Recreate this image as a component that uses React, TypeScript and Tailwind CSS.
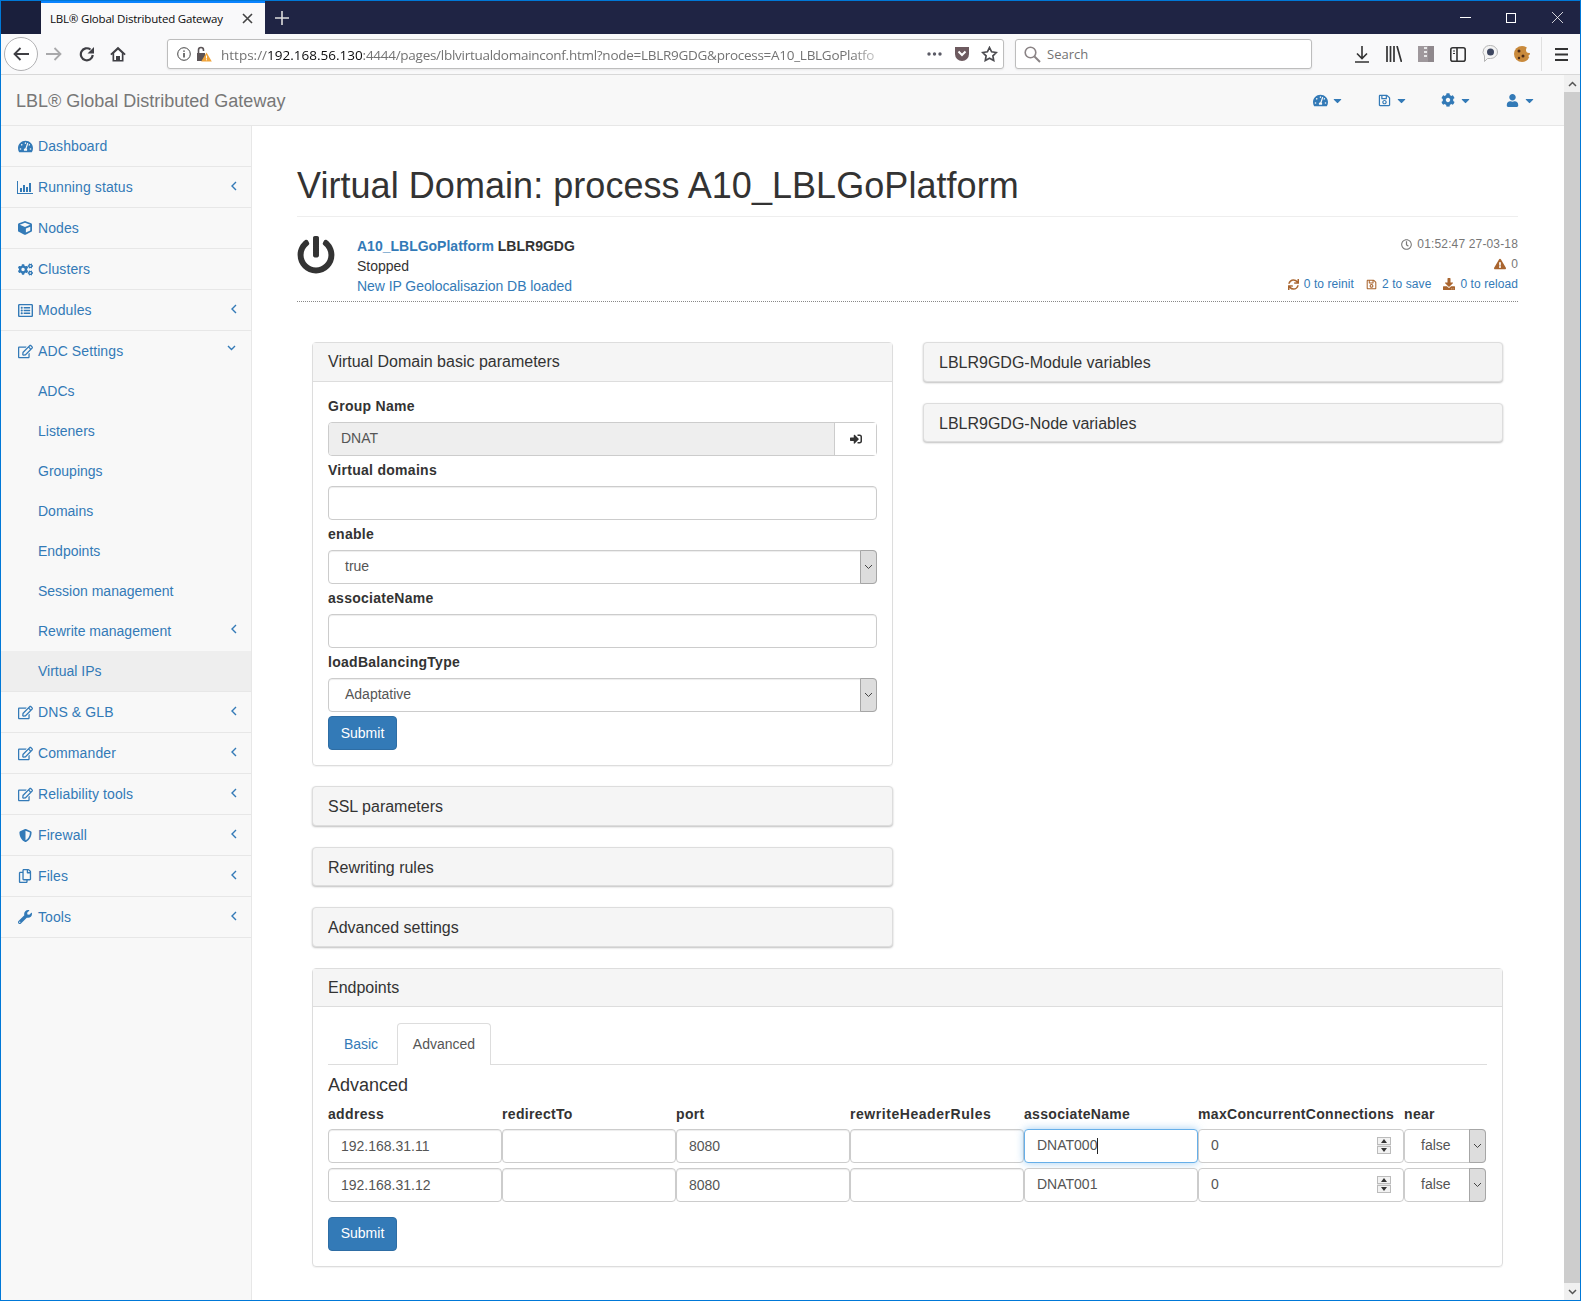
import React from "react";
import {
  FaCaretDown, FaCog, FaCogs, FaCube, FaDownload, FaExclamationTriangle, FaPowerOff,
  FaRegClock, FaRegCopy, FaRegEdit, FaRegListAlt, FaRegSave, FaShieldAlt, FaSignInAlt, FaSync, FaTachometerAlt, FaUser, FaWrench,
} from "react-icons/fa";

const BarIcon = () => (
  <svg width="16" height="13" viewBox="0 0 16 13" fill="currentColor">
    <path d="M0 0h1v12h15v1H0zM3 7h2v4H3zM6 4h2v7H6zM9 6h2v5H9zM12 2h2v9h-2z" />
  </svg>
);

const ChevLeft = ({ className }: { className: string }) => (
  <svg className={`absolute text-[#337ab7] ${className}`} width="6" height="10" viewBox="0 0 6 10" fill="none" stroke="currentColor" strokeWidth="1.400"><path d="M5 1L1 5l4 4" /></svg>
);
const ChevDown = ({ className }: { className: string }) => (
  <svg className={`absolute text-[#337ab7] ${className}`} width="9" height="6" viewBox="0 0 9 6" fill="none" stroke="currentColor" strokeWidth="1.400"><path d="M1 1l3.500 3.500L8 1" /></svg>
);

type Item = { label: string; icon: React.ReactNode; arrow?: "left" | "down" };
const top: Item[] = [
  { label: "Dashboard", icon: <FaTachometerAlt size={15} /> },
  { label: "Running status", icon: <BarIcon />, arrow: "left" },
  { label: "Nodes", icon: <FaCube size={14} /> },
  { label: "Clusters", icon: <FaCogs size={15} /> },
  { label: "Modules", icon: <FaRegListAlt size={15} />, arrow: "left" },
  { label: "ADC Settings", icon: <FaRegEdit size={15} />, arrow: "down" },
];
const subs = ["ADCs", "Listeners", "Groupings", "Domains", "Endpoints", "Session management", "Rewrite management", "Virtual IPs"];
const bottom: Item[] = [
  { label: "DNS & GLB", icon: <FaRegEdit size={15} />, arrow: "left" },
  { label: "Commander", icon: <FaRegEdit size={15} />, arrow: "left" },
  { label: "Reliability tools", icon: <FaRegEdit size={15} />, arrow: "left" },
  { label: "Firewall", icon: <FaShieldAlt size={13} />, arrow: "left" },
  { label: "Files", icon: <FaRegCopy size={14} />, arrow: "left" },
  { label: "Tools", icon: <FaWrench size={14} />, arrow: "left" },
];

function Row({ item, last }: { item: Item; last?: boolean }) {
  return (
    <div className={`relative flex items-center pl-[16px] ${last ? "h-[40px]" : "h-[41px] border-b border-[#e7e7e7]"}`}>
      <span className="flex w-[16px] justify-center text-[#337ab7]">{item.icon}</span>
      <span className="ml-[5px] text-[14px] tracking-[0.1px] text-[#337ab7]">{item.label}</span>
      {item.arrow === "left" && <ChevLeft className="left-[230px] top-[14px]" />}
      {item.arrow === "down" && <ChevDown className="left-[226px] top-[14px]" />}
    </div>
  );
}

function Sidebar() {
  return (
    <aside className="w-[251px] shrink-0 border-r border-[#e7e7e7] bg-[#f8f8f8]">
      {top.map((i, n) => <Row key={i.label} item={i} last={n === top.length - 1} />)}
      {subs.map((s) => (
        <div key={s} className={`relative flex h-[40px] items-center pl-[37px] text-[14px] text-[#337ab7] ${s === "Virtual IPs" ? "bg-[#eeeeee]" : ""}`}>
          {s}
          {s === "Rewrite management" && <ChevLeft className="left-[230px] top-[13px]" />}
        </div>
      ))}
      <div className="border-t border-[#e7e7e7]" />
      {bottom.map((i) => <Row key={i.label} item={i} />)}
    </aside>
  );
}

const Arrow = () => (
  <span className="-my-px -mr-px flex w-[17px] shrink-0 items-center justify-center self-stretch rounded-r-[4px] border border-[#a6a6a6] bg-[#dddddd]">
    <svg width="9" height="6" viewBox="0 0 9 6" fill="none" stroke="#444" strokeWidth="1"><path d="M1 1l3.500 3.500L8 1" /></svg>
  </span>
);

function Field({ label, children }: { label: string; children: React.ReactNode }) {
  return (
    <div className="mb-[4.500px]">
      <label className="mb-[5.500px] block h-[20px] text-[14px] font-bold leading-[20px] tracking-[0.28px] text-[#333]">{label}</label>
      {children}
    </div>
  );
}

function TextInput({ value = "" }: { value?: string }) {
  return <input readOnly value={value} className="block h-[34px] w-full rounded-[4px] border border-[#ccc] bg-white px-[12px] text-[14px] text-[#555] shadow-[inset_0_1px_1px_rgba(0,0,0,0.075)]" />;
}

function SelectBox({ value }: { value: string }) {
  return (
    <div className="flex h-[34px] items-center rounded-[4px] border border-[#ccc] bg-white shadow-[inset_0_1px_1px_rgba(0,0,0,0.075)]">
      <span className="flex-1 pl-[16px] text-[14px] text-[#555]">{value}</span>
      <Arrow />
    </div>
  );
}

const SubmitBtn = () => (
  <button className="flex h-[34px] w-[69px] items-center justify-center rounded-[4px] border border-[#2e6da4] bg-[#337ab7] text-[14px] text-white">Submit</button>
);

function Collapsed({ title }: { title: string }) {
  return (
    <div className="h-[39.500px] rounded-[4px] border border-[#ddd] bg-[#f5f5f5] px-[15px] text-[16px] leading-[39px] text-[#333] shadow-[0_1px_2px_rgba(0,0,0,0.25)]">{title}</div>
  );
}

function Spin() {
  return (
    <span className="mr-[12px] flex h-[17px] w-[14px] flex-col justify-between bg-[#e6e6e6]">
      <span className="flex h-[8px] items-center justify-center border border-[#bbb] bg-[#f2f2f2]"><svg width="6" height="4" viewBox="0 0 6 4" fill="#333"><path d="M3 0l3 4H0z" /></svg></span>
      <span className="flex h-[8px] items-center justify-center border border-[#bbb] bg-[#f2f2f2]"><svg width="6" height="4" viewBox="0 0 6 4" fill="#333"><path d="M0 0h6L3 4z" /></svg></span>
    </span>
  );
}

function EndpointRow({ a, assoc, focused }: { a: string; assoc: string; focused?: boolean }) {
  return (
    <>
      <TextInput value={a} />
      <TextInput />
      <TextInput value="8080" />
      <TextInput />
      <div className={`flex h-[34px] items-center rounded-[4px] border bg-white pl-[12px] text-[14px] text-[#555] ${focused ? "border-[#66afe9] shadow-[0_0_8px_rgba(102,175,233,0.6)]" : "border-[#ccc]"}`}>
        {assoc}{focused && <span className="h-[16px] w-px bg-[#222]" />}
      </div>
      <div className="flex h-[34px] items-center justify-between rounded-[4px] border border-[#ccc] bg-white pl-[12px] text-[14px] text-[#555]">0<Spin /></div>
      <div className="flex h-[34px] items-center rounded-[4px] border border-[#ccc] bg-white text-[14px] text-[#555]">
        <span className="flex-1 pl-[16px]">false</span>
        <Arrow />
      </div>
    </>
  );
}

const Header = ["address", "redirectTo", "port", "rewriteHeaderRules", "associateName", "maxConcurrentConnections", "near"];

function Browser() {
  const c = "flex h-full w-[32px] items-center justify-center";
  return (
    <>
      <div className="flex h-[33px] items-stretch bg-[#1f2444]">
        <div className="w-[40px] bg-[#1a1f3c]" />
        <div className="flex w-[224px] items-center border-t-2 border-[#0a84ff] bg-[#f9f9fa] pl-[9px] font-[family-name:Open_Sans,sans-serif] text-[11.500px] tracking-[-0.2px] text-[#0c0c0d]">
          <span className="w-[192px] whitespace-nowrap">LBL® Global Distributed Gateway</span>
          <svg width="11" height="11" viewBox="0 0 11 11" stroke="#444" strokeWidth="1.600"><path d="M1 1l9 9M10 1l-9 9" /></svg>
        </div>
        <div className="flex w-[34px] items-center justify-center">
          <svg width="14" height="14" viewBox="0 0 14 14" stroke="#ddd" strokeWidth="1.600"><path d="M7 0v14M0 7h14" /></svg>
        </div>
        <div className="flex-1" />
        <div className="flex w-[138px] items-center text-white">
          <span className="flex w-[46px] justify-center"><svg width="11" height="1" viewBox="0 0 11 1"><path d="M0 0h11v1H0z" fill="#fff" /></svg></span>
          <span className="flex w-[46px] justify-center"><svg width="10" height="10" viewBox="0 0 10 10" fill="none" stroke="#fff"><rect x=".5" y=".5" width="9" height="9" /></svg></span>
          <span className="flex w-[46px] justify-center"><svg width="11" height="11" viewBox="0 0 11 11" stroke="#fff" strokeWidth=".8"><path d="M0 0l11 11M11 0L0 11" /></svg></span>
        </div>
      </div>
      <div className="flex h-[41px] items-center border-b border-[#d8d8d8] bg-[#f9f9fa] pl-[3px]">
        <span className="flex h-[34px] w-[34px] items-center justify-center rounded-full border border-[#b1b1b3] bg-white">
          <svg width="16" height="14" viewBox="0 0 16 14" fill="none" stroke="#3f3f44" strokeWidth="1.800"><path d="M16 7H2M7.500 1L1.500 7l6 6" /></svg>
        </span>
        <span className={c}><svg width="16" height="14" viewBox="0 0 16 14" fill="none" stroke="#a9a9ab" strokeWidth="1.800"><path d="M0 7h14M8.500 1l6 6-6 6" /></svg></span>
        <span className={c}><svg className="ml-[1px]" width="16" height="16" viewBox="0 0 16 16" fill="none" stroke="#3f3f44" strokeWidth="2.200"><path d="M13.800 9A6 6 0 1 1 11.500 3.500" /><path d="M15 1v6.500H8.500z" fill="#3f3f44" stroke="none" /></svg></span>
        <span className={c}><svg width="16" height="16" viewBox="0 0 16 16"><path d="M8 .8L.3 8l1.100 1.200L2.500 8.200V15.500h11V8.200l1.100 1L15.700 8z" fill="#3f3f44" /><path d="M8 3.800l3.800 3.500v6.600h-1.800v-4H6v4H4.200V7.300z" fill="#fff" /></svg></span>
        <div className="relative ml-[33px] flex h-[30px] w-[837px] items-center rounded-[3px] border border-[#bdbdbd] bg-white pl-[9px] shadow-[0_1px_2px_rgba(0,0,0,0.08)]">
          <svg width="14" height="14" viewBox="0 0 14 14" fill="none" stroke="#444"><circle cx="7" cy="7" r="6.300" /><path d="M7 6v4.500M7 3.500v1.300" strokeWidth="1.500" /></svg>
          <svg className="ml-[5px]" width="16" height="16" viewBox="0 0 16 16"><path d="M1 7h8v8H1z" fill="#5b5457" /><path d="M2.500 7V4a2.500 2.500 0 0 1 5 0v1" fill="none" stroke="#5b5457" strokeWidth="1.600" /><path d="M10.500 6.500l5.300 9H5.200z" fill="#f0a43a" /><path d="M10 9.500h1v3h-1zM10 13.200h1v1h-1z" fill="#fff" /></svg>
          <div className="ml-[9px] mt-[2px] w-[670px] whitespace-nowrap font-[family-name:Open_Sans,sans-serif] text-[13.500px] text-[#737373] [mask-image:linear-gradient(to_right,black_94%,transparent)]">
            https://<span className="text-[#0c0c0d]">192.168.56.130</span><span className="tracking-[-0.27px]">:4444/pages/lblvirtualdomainconf.html?node=LBLR9GDG&amp;process=A10_LBLGoPlatfo</span>
          </div>
          <svg className="ml-[36px]" width="15" height="4" viewBox="0 0 15 4" fill="#5b5b66"><circle cx="2" cy="2" r="1.700" /><circle cx="7.500" cy="2" r="1.700" /><circle cx="13" cy="2" r="1.700" /></svg>
          <svg className="ml-[12px]" width="16" height="16" viewBox="0 0 16 16"><path d="M1 1h14v7a7 7 0 0 1-14 0z" fill="#6d5a5f" /><path d="M4.500 5.500L8 9l3.500-3.500" fill="none" stroke="#fff" strokeWidth="2" /></svg>
          <svg className="ml-[11px]" width="17" height="16" viewBox="0 0 17 16" fill="none" stroke="#4a4a4f" strokeWidth="1.700"><path d="M8.500 1.500l2.100 4.300 4.700.7-3.400 3.300.8 4.700-4.200-2.200-4.200 2.200.8-4.700L1.700 6.500l4.700-.7z" /></svg>
        </div>
        <div className="ml-[11px] flex h-[30px] w-[297px] items-center rounded-[3px] border border-[#bdbdbd] bg-white pl-[8px] shadow-[0_1px_2px_rgba(0,0,0,0.08)]">
          <svg width="17" height="17" viewBox="0 0 17 17" fill="none" stroke="#8a8385" strokeWidth="1.600"><circle cx="6.500" cy="6.500" r="5.300" /><path d="M10.500 10.500L16 16" strokeWidth="2" /></svg>
          <span className="ml-[6px] mt-[2px] font-[family-name:Open_Sans,sans-serif] text-[13px] text-[#737373]">Search</span>
        </div>
        <div className="ml-[34px] flex h-full items-center">
          <span className={c}><svg width="14" height="17" viewBox="0 0 14 17" fill="none" stroke="#333" strokeWidth="1.600"><path d="M7 0v12M2 7.500l5 5 5-5M0 16h14" /></svg></span>
          <span className={c}><svg width="16" height="16" viewBox="0 0 16 16" stroke="#333" strokeWidth="1.700"><path d="M1 0v16M4.500 0v16M8 0v16M11 0l4.500 16" /></svg></span>
          <span className={c}><svg width="16" height="16" viewBox="0 0 16 16"><rect width="16" height="16" fill="#9f989c" /><path d="M6 1h3v2H6zM6 5h3v2H6zM6 9h3v2H6z" fill="#e8e8e8" /><rect x="10" width="6" height="16" fill="#8f888c" /></svg></span>
          <span className={c}><svg width="16" height="15" viewBox="0 0 16 15" fill="none" stroke="#333" strokeWidth="1.600"><rect x=".8" y=".8" width="14.400" height="13.400" rx="2" /><path d="M7 1v13" /><path d="M3 4h2M3 6.500h2" strokeWidth="1" /></svg></span>
          <span className={c}><svg width="17" height="18" viewBox="0 0 17 18"><path d="M8.500 .5a7 6.500 0 0 1 0 13H5.500L2.500 16.500V11A7 6.500 0 0 1 8.500 .5z" fill="#f4f4f4" stroke="#b5b5b5" /><circle cx="8.500" cy="7" r="3.500" fill="#3d4660" /></svg></span>
          <span className={c}><svg width="17" height="18" viewBox="0 0 17 18"><circle cx="8" cy="9" r="8" fill="#c98a3c" /><circle cx="5" cy="6" r="1.500" fill="#4a2a18" /><circle cx="9" cy="11" r="1.500" fill="#4a2a18" /><circle cx="5" cy="13" r="1.200" fill="#4a2a18" /><circle cx="15" cy="5" r="3" fill="#f9f9fa" /><circle cx="16" cy="11" r="1.500" fill="#f9f9fa" /></svg></span>
        </div>
        <span className="ml-[3px] h-[34px] w-px bg-[#e0e0e0]" />
        <span className="flex w-[38px] justify-center"><svg width="13" height="13" viewBox="0 0 13 13" fill="#333"><path d="M0 0h13v2H0zM0 5.500h13v2H0zM0 11h13v2H0z" /></svg></span>
      </div>
    </>
  );
}

function Navbar() {
  const items = [
    { i: <FaTachometerAlt size={15} />, w: "w-[64px]" },
    { i: <FaRegSave size={13} />, w: "w-[64px]" },
    { i: <FaCog size={14} />, w: "w-[64px]" },
    { i: <FaUser size={13} />, w: "w-[44px]" },
  ];
  return (
    <div className="flex h-[51px] items-center justify-between border-b border-[#e7e7e7] bg-[#f8f8f8] pl-[15px]">
      <span className="pt-[2px] text-[18px] text-[#777]">LBL® Global Distributed Gateway</span>
      <div className="flex pr-[16px]">
        {items.map((x, n) => (
          <span key={n} className={`flex ${x.w} items-center gap-[3px] text-[#337ab7]`}>
            <span className="flex w-[16px] justify-center">{x.i}</span>
            <FaCaretDown size={13} />
          </span>
        ))}
      </div>
    </div>
  );
}

function Main() {
  const brown = "text-[#a9652f]";
  return (
    <main className="min-w-0 flex-1 bg-white pl-[45px] pr-[46px] pt-[40px]">
      <h1 className="border-b border-[#eeeeee] pb-[10px] text-[36px] font-normal leading-[40px] tracking-[0.05px] text-[#333]">Virtual Domain: process A10_LBLGoPlatform</h1>
      <div className="flex justify-between border-b border-dotted border-[#888] pb-[5px] pt-[19px]">
        <div className="flex">
          <FaPowerOff size={38} className="mr-[22px] text-[#333]" />
          <div className="text-[14px] leading-[20px] text-[#333]">
            <div className="font-bold"><span className="text-[#337ab7]">A10_LBLGoPlatform</span> LBLR9GDG</div>
            <div>Stopped</div>
            <div className="tracking-[-0.06px] text-[#337ab7]">New IP Geolocalisazion DB loaded</div>
          </div>
        </div>
        <div className="mt-[-2px] flex flex-col items-end text-[12px] leading-[20px]">
          <div className="flex items-center gap-[5px] tracking-[0.15px] text-[#777]"><FaRegClock size={11} />01:52:47 27-03-18</div>
          <div className={`flex items-center gap-[5px] ${brown}`}><FaExclamationTriangle size={12} className="text-[#a9652f]" /><span className="text-[#777]">0</span></div>
          <div className="flex items-center tracking-[0.08px] text-[#337ab7]">
            <FaSync size={11} className={`${brown} mr-[5px]`} />0 to reinit
            <FaRegSave size={11} className={`${brown} ml-[12px] mr-[5px]`} />2 to save
            <FaDownload size={12} className={`${brown} ml-[12px] mr-[5px]`} />0 to reload
          </div>
        </div>
      </div>

      <div className="mx-[15px] mt-[40px] flex gap-[30px]">
        <div className="flex w-[581px] shrink-0 flex-col gap-[21px]">
          <div className="-mb-[1px] rounded-[4px] border border-[#ddd] shadow-[0_1px_1px_rgba(0,0,0,0.05)]">
            <div className="h-[39px] border-b border-[#ddd] bg-[#f5f5f5] px-[15px] text-[16px] leading-[38px] text-[#333]">Virtual Domain basic parameters</div>
            <div className="h-[383px] px-[15px] pt-[14px]">
              <Field label="Group Name">
                <div className="flex h-[34px] rounded-[4px] border border-[#ccc]">
                  <input readOnly value="DNAT" className="min-w-0 flex-1 rounded-l-[3px] bg-[#eeeeee] px-[12px] text-[14px] text-[#555]" />
                  <span className="flex w-[42px] items-center justify-center border-l border-[#ccc] bg-white"><FaSignInAlt size={12} className="text-[#333]" /></span>
                </div>
              </Field>
              <Field label="Virtual domains"><TextInput /></Field>
              <Field label="enable"><SelectBox value="true" /></Field>
              <Field label="associateName"><TextInput /></Field>
              <Field label="loadBalancingType"><SelectBox value="Adaptative" /></Field>
              <div className="mt-[4px]"><SubmitBtn /></div>
            </div>
          </div>
          <Collapsed title="SSL parameters" />
          <Collapsed title="Rewriting rules" />
          <Collapsed title="Advanced settings" />
        </div>
        <div className="flex w-[580px] shrink-0 flex-col gap-[21px]">
          <Collapsed title="LBLR9GDG-Module variables" />
          <Collapsed title="LBLR9GDG-Node variables" />
        </div>
      </div>

      <div className="mx-[15px] mt-[21px] rounded-[4px] border border-[#ddd] shadow-[0_1px_1px_rgba(0,0,0,0.05)]">
        <div className="h-[38px] border-b border-[#ddd] bg-[#f5f5f5] px-[15px] text-[16px] leading-[38px] text-[#333]">Endpoints</div>
        <div className="px-[15px] pb-[15px] pt-[16px]">
          <div className="flex h-[42px] items-end border-b border-[#ddd] pl-px">
            <span className="mr-[4px] flex h-[39px] w-[64px] items-center justify-center text-[14px] text-[#337ab7]">Basic</span>
            <span className="mb-[-1px] flex h-[42px] w-[94px] items-center justify-center rounded-t-[4px] border border-b-0 border-[#ddd] bg-white text-[14px] text-[#555]">Advanced</span>
          </div>
          <h4 className="mt-[10px] text-[18px] font-normal leading-[20px] text-[#333]">Advanced</h4>
          <div className="mt-[9px] grid grid-cols-[174px_174px_174px_174px_174px_206px_82px] gap-y-[5px]">
            {Header.map((h) => <div key={h} className={`whitespace-nowrap text-[14px] font-bold leading-[20px] text-[#333] ${h === "rewriteHeaderRules" ? "tracking-[0.55px]" : "tracking-[0.33px]"}`}>{h}</div>)}
            <EndpointRow a="192.168.31.11" assoc="DNAT000" focused />
            <EndpointRow a="192.168.31.12" assoc="DNAT001" />
          </div>
          <div className="mt-[15px]"><SubmitBtn /></div>
        </div>
      </div>
    </main>
  );
}

function Scrollbar() {
  return (
    <div className="flex w-[16px] shrink-0 flex-col bg-[#f0f0f0]">
      <div className="flex h-[17px] items-center justify-center"><svg width="9" height="6" viewBox="0 0 9 6" fill="none" stroke="#555" strokeWidth="1.500"><path d="M1 5l3.500-3.500L8 5" /></svg></div>
      <div className="flex-1 bg-[#cdcdcd]" />
      <div className="flex h-[17px] items-center justify-center"><svg width="9" height="6" viewBox="0 0 9 6" fill="none" stroke="#555" strokeWidth="1.500"><path d="M1 1l3.500 3.500L8 1" /></svg></div>
    </div>
  );
}

export default function App() {
  return (
    <div className="flex h-[1301px] w-[1581px] flex-col overflow-hidden border border-[#0078d7] bg-white font-[family-name:Liberation_Sans,Arial,sans-serif]">
      <Browser />
      <div className="flex min-h-0 flex-1">
        <div className="flex min-w-0 flex-1 flex-col">
          <Navbar />
          <div className="flex min-h-0 flex-1">
            <Sidebar />
            <Main />
          </div>
        </div>
        <Scrollbar />
      </div>
    </div>
  );
}
